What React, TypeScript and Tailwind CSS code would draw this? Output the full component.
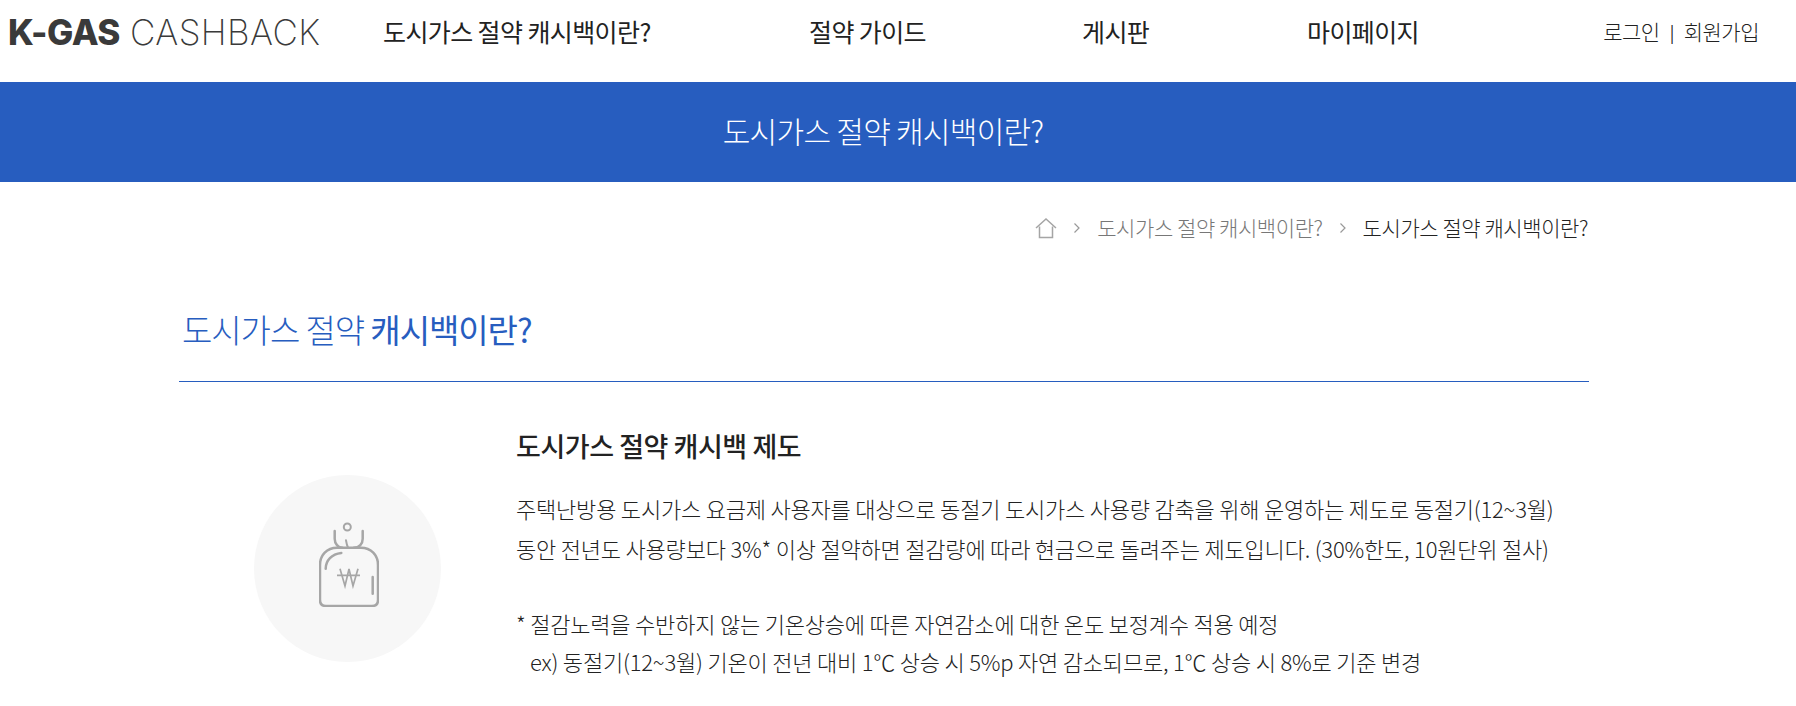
const kr = "font-['Noto_Sans_CJK_KR','Noto_Sans',sans-serif]";

function Logo() {
  return (
    <div className="w-[383px] pl-[8px] flex items-baseline font-['Inter',sans-serif] text-[35px] leading-none text-[#3a3a3a]">
      <span className="font-extrabold tracking-[-0.5px]">K-GAS</span>
      <span className="ml-[10px] font-extralight tracking-[0.4px]">CASHBACK</span>
    </div>
  );
}

function Header() {
  return (
    <header className={`h-[82px] pb-[18px] flex items-center bg-white ${kr}`}>
      <Logo />
      <nav className="flex-1 flex items-center text-[25px] font-normal tracking-[-0.6px] text-[#222]">
        <a className="w-[426px]">도시가스 절약 캐시백이란?</a>
        <a className="w-[273px]">절약 가이드</a>
        <a className="w-[225px]">게시판</a>
        <a>마이페이지</a>
      </nav>
      <div className="pr-[37px] flex items-center gap-[10px] text-[21px] font-light tracking-[-0.5px] text-[#222]">
        <a>로그인</a>
        <span className="text-[17px] font-normal">|</span>
        <a>회원가입</a>
      </div>
    </header>
  );
}

function Breadcrumb() {
  const chevron = (
    <svg width="8" height="12" viewBox="0 0 8 12" fill="none" stroke="#999" strokeWidth="1.2">
      <path d="M1.5 1.5 6 6l-4.500 4.500" />
    </svg>
  );
  return (
    <div className="w-[1410px] mx-auto h-[92px] flex items-center justify-end gap-[16px] pr-[1px] text-[21px] font-light tracking-[-0.42px]">
      <svg width="22" height="22" viewBox="0 0 22 22" fill="none" stroke="#a5a5a5" strokeWidth="1.5">
        <path d="M1 11 11 2l10 9" />
        <path d="M4.500 9.500V20.500h13V9.500" />
      </svg>
      {chevron}
      <span className="text-[#777]">도시가스 절약 캐시백이란?</span>
      {chevron}
      <span className="text-[#222]">도시가스 절약 캐시백이란?</span>
    </div>
  );
}

function MoneyBag() {
  return (
    <svg width="60" height="86" viewBox="0 0 60 86" fill="none" stroke="#a6a6a6" strokeWidth="2.500" strokeLinecap="round">
      <circle cx="28.300" cy="6" r="3.500" strokeWidth="2" />
      <path d="M15.700 10v7.700c0 5 3.500 9 7.600 9" />
      <path d="M43.700 10v7.700c0 5-3.500 9-8.700 9" />
      <path d="M27 19.300c.5 3 1.200 5.500 2 7.400" strokeWidth="2" />
      <path d="M18 26.700h24c10 0 17 7.300 17 17.300v35c0 4-2 6-6 6H7c-4 0-6-2-6-6V44c0-10 7-17.300 17-17.300Z" />
      <path d="M6.700 47.700c0-8 6-14.700 15.600-15.700" />
      <path d="M53.700 56v16.700" />
      <path d="M21 47.700 26 65l4-17 4 17 5-17.300M18 54.300h23" strokeWidth="1.700" strokeLinecap="butt" />
    </svg>
  );
}

export default function App() {
  return (
    <div className={`h-[706px] overflow-hidden bg-white ${kr}`}>
      <Header />
      <div className="h-[100px] pr-[30px] pb-[4px] bg-[#275dbf] flex items-center justify-center text-white text-[30px] font-light tracking-[-0.7px]">
        도시가스 절약 캐시백이란?
      </div>
      <div className="w-[1768px]">
        <Breadcrumb />
        <main className="w-[1410px] mx-auto">
          <h2 className="mt-[30px] h-[78px] pl-[3px] pt-[1px] border-b border-[#275dbf] text-[33px] font-light tracking-[-1.05px] text-[#275dbf]">
            도시가스 절약 <span className="font-normal">캐시백이란?</span>
          </h2>
          <section className="flex pt-[48px]">
            <div className="w-[337px] pt-[45px] shrink-0 pl-[75px]">
              <div className="w-[187px] h-[187px] pb-[10px] pl-[2px] rounded-full bg-[#f7f7f7] flex items-center justify-center">
                <MoneyBag />
              </div>
            </div>
            <div className="text-[#222]">
              <h3 className="text-[27px] font-medium leading-[32px] tracking-[-0.45px]">도시가스 절약 캐시백 제도</h3>
              <p className="mt-[26px] text-[22px] font-light leading-[40px] tracking-[-0.2px]">
                주택난방용 도시가스 요금제 사용자를 대상으로 동절기 도시가스 사용량 감축을 위해 운영하는 제도로 동절기(12~3월)
                <br />
                동안 전년도 사용량보다 3%* 이상 절약하면 절감량에 따라 현금으로 돌려주는 제도입니다. (30%한도, 10원단위 절사)
              </p>
              <p className="mt-[36px] text-[22px] font-light leading-[38px] tracking-[-0.2px]">
                * 절감노력을 수반하지 않는 기온상승에 따른 자연감소에 대한 온도 보정계수 적용 예정
                <br />
                <span className="pl-[14px]">ex) 동절기(12~3월) 기온이 전년 대비 1℃ 상승 시 5%p 자연 감소되므로, 1℃ 상승 시 8%로 기준 변경</span>
              </p>
            </div>
          </section>
        </main>
      </div>
    </div>
  );
}
